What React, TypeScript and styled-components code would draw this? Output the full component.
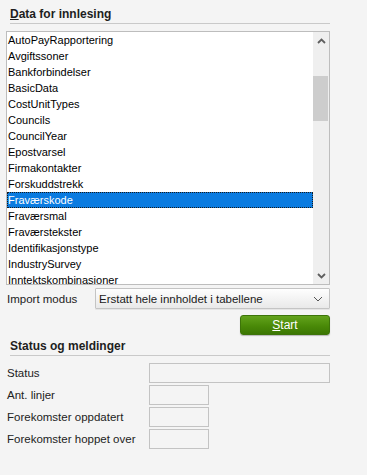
import { Fragment } from "react";
import styled, { createGlobalStyle } from "styled-components";

const GlobalStyle = createGlobalStyle`
  html, body {
    margin: 0;
    padding: 0;
    background: #f4f4f4;
  }
  body {
    font-family: "Liberation Sans", Arial, sans-serif;
    color: #1a1a1a;
  }
`;

const tables = [
  "AutoPayRapportering",
  "Avgiftssoner",
  "Bankforbindelser",
  "BasicData",
  "CostUnitTypes",
  "Councils",
  "CouncilYear",
  "Epostvarsel",
  "Firmakontakter",
  "Forskuddstrekk",
  "Fraværskode",
  "Fraværsmal",
  "Fraværstekster",
  "Identifikasjonstype",
  "IndustrySurvey",
  "Inntektskombinasjoner",
];

const Page = styled.div`
  width: 324px;
  margin-left: 6px;
  height: 475px;
  display: flex;
  flex-direction: column;
`;

const SectionTitle = styled.div<{ $top: number }>`
  margin: ${(p) => p.$top}px 0 0 4px;
  padding: 0 0 2px 0;
  border-bottom: 1px solid #c9c9c9;
  font-size: 12px;
  line-height: 14px;
  font-weight: bold;
  color: #1e1e1e;
`;

const ListBox = styled.div`
  margin-top: 7px;
  height: 254px;
  box-sizing: border-box;
  border: 1px solid #bdbdbd;
  background: #ffffff;
  display: flex;
  overflow: hidden;
`;

const ListItems = styled.div`
  flex: 1;
  display: flex;
  flex-direction: column;
  overflow: hidden;
`;

const ListItem = styled.div<{ $selected?: boolean }>`
  flex: 0 0 16px;
  box-sizing: border-box;
  font-size: 11px;
  line-height: ${(p) => (p.$selected ? "14px" : "16px")};
  white-space: nowrap;
  color: ${(p) => (p.$selected ? "#ffffff" : "#000000")};
  background: ${(p) => (p.$selected ? "#0a7be0" : "transparent")};
  border: ${(p) => (p.$selected ? "1px dotted #1a1a1a" : "none")};
  padding-left: ${(p) => (p.$selected ? "0" : "1px")};
`;

const ScrollBar = styled.div`
  width: 16px;
  background: #efefef;
  display: flex;
  flex-direction: column;
`;

const ScrollButton = styled.div`
  height: 17px;
  display: flex;
  align-items: center;
  justify-content: center;
`;

const ScrollTrack = styled.div`
  flex: 1;
`;

const ScrollThumb = styled.div`
  margin-top: 27px;
  width: 15px;
  height: 45px;
  background: #cdcdcd;
`;

const ImportRow = styled.div`
  margin-top: 3px;
  display: flex;
  align-items: center;
`;

const FieldLabel = styled.div`
  padding-left: 1px;
  font-size: 11.5px;
  color: #222222;
  white-space: nowrap;
`;

const ImportLabel = styled(FieldLabel)`
  width: 88px;
`;

const Select = styled.div`
  flex: 1;
  height: 21px;
  box-sizing: border-box;
  border: 1px solid #c4c4c4;
  border-radius: 1px;
  background: linear-gradient(#fefefe, #e9e9e9);
  display: flex;
  align-items: center;
  justify-content: space-between;
  padding: 0 6px 0 3px;
  font-size: 11.5px;
  color: #1a1a1a;
  box-shadow: 0 1px 0 rgba(0, 0, 0, 0.06);
`;

const ButtonRow = styled.div`
  margin-top: 6px;
  display: flex;
  justify-content: flex-end;
`;

const StartButton = styled.button`
  width: 90px;
  height: 20px;
  box-sizing: border-box;
  border: 1px solid #3d7409;
  border-radius: 3px;
  background: linear-gradient(#63a31c, #4a8a08 55%, #3c7703);
  color: #ffffff;
  font-family: "Liberation Sans", Arial, sans-serif;
  font-size: 12px;
  padding: 0;
  box-shadow: 0 1px 1px rgba(0, 0, 0, 0.25);
`;

const FieldGrid = styled.div`
  margin-top: 7px;
  display: grid;
  grid-template-columns: 143px 1fr;
  row-gap: 2px;
  align-items: center;
`;

const ValueBox = styled.div<{ $wide?: boolean }>`
  width: ${(p) => (p.$wide ? "181px" : "60px")};
  height: 20px;
  box-sizing: border-box;
  border: 1px solid #c3c3c3;
  background: #f4f4f4;
`;

const Arrow = ({ up }: { up?: boolean }) => (
  <svg width="9" height="6" viewBox="0 0 9 6">
    <path
      d={up ? "M1 5 L4.5 1.5 L8 5" : "M1 1 L4.5 4.5 L8 1"}
      fill="none"
      stroke="#5f5f5f"
      strokeWidth="1.8"
    />
  </svg>
);

const Chevron = () => (
  <svg width="10" height="6" viewBox="0 0 10 6">
    <path d="M1 1 L5 5 L9 1" fill="none" stroke="#555555" strokeWidth="1" />
  </svg>
);

const fields = [
  { label: "Status", wide: true },
  { label: "Ant. linjer" },
  { label: "Forekomster oppdatert" },
  { label: "Forekomster hoppet over" },
];

export default function App() {
  return (
    <>
      <GlobalStyle />
      <Page>
        <SectionTitle $top={7}>
          <u>D</u>ata for innlesing
        </SectionTitle>
        <ListBox>
          <ListItems>
            {tables.map((name) => (
              <ListItem key={name} $selected={name === "Fraværskode"}>
                {name}
              </ListItem>
            ))}
          </ListItems>
          <ScrollBar>
            <ScrollButton>
              <Arrow up />
            </ScrollButton>
            <ScrollTrack>
              <ScrollThumb />
            </ScrollTrack>
            <ScrollButton>
              <Arrow />
            </ScrollButton>
          </ScrollBar>
        </ListBox>
        <ImportRow>
          <ImportLabel>Import modus</ImportLabel>
          <Select>
            <span>Erstatt hele innholdet i tabellene</span>
            <Chevron />
          </Select>
        </ImportRow>
        <ButtonRow>
          <StartButton>
            <u>S</u>tart
          </StartButton>
        </ButtonRow>
        <SectionTitle $top={4}>Status og meldinger</SectionTitle>
        <FieldGrid>
          {fields.map((f) => (
            <Fragment key={f.label}>
              <FieldLabel>{f.label}</FieldLabel>
              <ValueBox $wide={f.wide} />
            </Fragment>
          ))}
        </FieldGrid>
      </Page>
    </>
  );
}
